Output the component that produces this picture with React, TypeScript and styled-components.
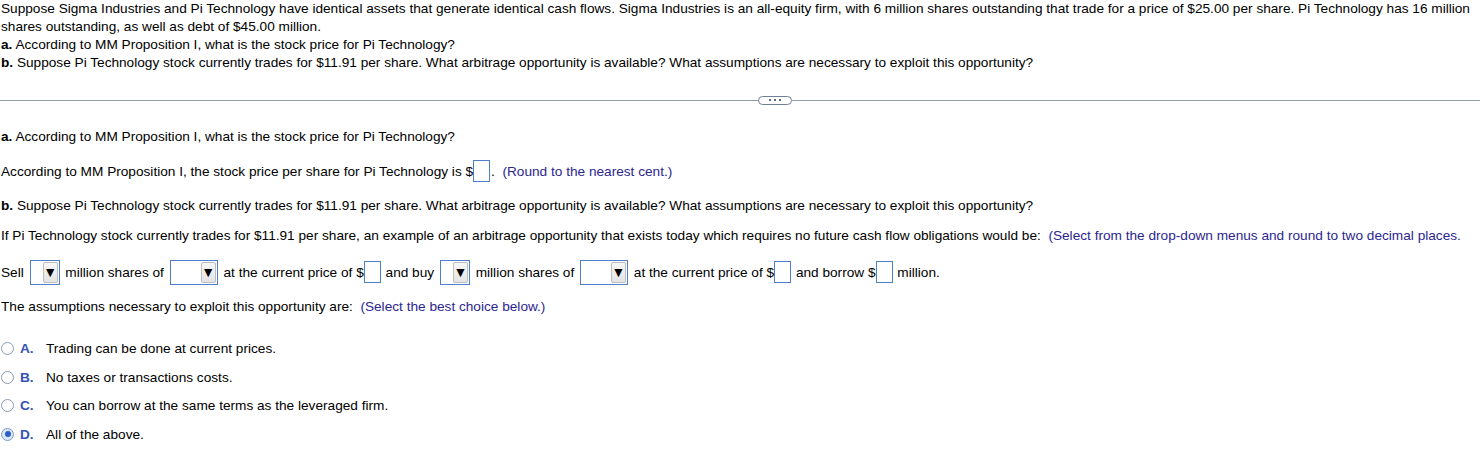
import styled, { createGlobalStyle } from "styled-components";

const GlobalStyle = createGlobalStyle`
  html, body {
    margin: 0;
    padding: 0;
    background: #fff;
  }
  body {
    font-family: "Liberation Sans", Arial, sans-serif;
    font-size: 13.65px;
    color: #000;
  }
`;

const Page = styled.div`
  width: 1480px;
  padding-left: 1px;
  box-sizing: border-box;
`;

const Question = styled.div`
  width: 1474px;
  line-height: 18px;
`;

const Line = styled.div`
  line-height: 18px;
`;

const Bold = styled.b`
  font-weight: bold;
`;

const DividerRow = styled.div`
  display: flex;
  align-items: center;
  margin: 24px 0 0 -1px;
  height: 8px;
`;

const Rule = styled.div<{ $w?: number }>`
  flex: ${(p) => (p.$w ? `0 0 ${p.$w}px` : "1")};
  height: 1px;
  background: #8f9cab;
`;

const MoreButton = styled.div`
  width: 32px;
  height: 7px;
  border: 1px solid #6f7f91;
  border-radius: 5px;
  background: #fff;
  display: flex;
  align-items: center;
  justify-content: center;
  gap: 3px;
`;

const Dot = styled.span`
  width: 2px;
  height: 2px;
  background: #5d6d80;
`;

const Block = styled.div<{ $top: number; $h?: number }>`
  margin-top: ${(p) => p.$top}px;
  height: ${(p) => p.$h ?? 18}px;
  line-height: ${(p) => p.$h ?? 18}px;
  white-space: nowrap;
`;

const Hint = styled.span`
  color: #2c2690;
`;

const AnswerBox = styled.span`
  display: inline-block;
  width: 15px;
  height: 20px;
  border: 1px solid #4d7fcc;
  vertical-align: middle;
  margin: -2px 1px 0 0;
  background: #fff;
`;

const SelectBox = styled.span<{ $w: number }>`
  display: inline-flex;
  justify-content: flex-end;
  align-items: center;
  box-sizing: border-box;
  width: ${(p) => p.$w}px;
  height: 25px;
  border: 1px solid #4d7fcc;
  padding-right: 1px;
  vertical-align: middle;
  margin: -2px 2px 0;
`;

const Arrow = styled.span`
  width: 15px;
  height: 21px;
  box-sizing: border-box;
  border: 1px solid #bdbdbd;
  border-radius: 2px;
  background: linear-gradient(#f7f7f7, #e4e4e4);
  display: flex;
  align-items: center;
  justify-content: center;
  font-size: 14px;
  line-height: 1;
  color: #000;
`;

const Choices = styled.div`
  margin-top: 18px;
  display: grid;
  grid-auto-rows: 28.7px;
`;

const Choice = styled.div`
  display: flex;
  align-items: center;
  margin-left: -1px;
`;

const Radio = styled.span<{ $on?: boolean }>`
  width: 13px;
  height: 13px;
  box-sizing: border-box;
  border-radius: 50%;
  border: 1px solid ${(p) => (p.$on ? "#7d9bc6" : "#8b9db3")};
  background: ${(p) => (p.$on ? "#dbe6f6" : "#fff")};
  display: flex;
  align-items: center;
  justify-content: center;
  margin-left: 1px;
  &::after {
    content: "";
    display: ${(p) => (p.$on ? "block" : "none")};
    width: 6px;
    height: 6px;
    border-radius: 50%;
    background: #2c5cc5;
  }
`;

const Letter = styled.span`
  font-weight: bold;
  color: #3552b5;
  width: 26px;
  margin-left: 6px;
`;

const choices = [
  { key: "A.", text: "Trading can be done at current prices." },
  { key: "B.", text: "No taxes or transactions costs." },
  { key: "C.", text: "You can borrow at the same terms as the leveraged firm." },
  { key: "D.", text: "All of the above.", on: true },
];

const Select = ({ w }: { w: number }) => (
  <SelectBox $w={w}>
    <Arrow>▼</Arrow>
  </SelectBox>
);

export default function App() {
  return (
    <Page>
      <GlobalStyle />
      <Question>
        Suppose Sigma Industries and Pi Technology have identical assets that generate identical cash flows. Sigma
        Industries is an all-equity firm, with 6 million shares outstanding that trade for a price of $25.00 per share. Pi
        Technology has 16 million shares outstanding, as well as debt of $45.00 million.
        <Line>
          <Bold>a.</Bold> According to MM Proposition I, what is the stock price for Pi Technology?
        </Line>
        <Line>
          <Bold>b.</Bold> Suppose Pi Technology stock currently trades for $11.91 per share. What arbitrage opportunity is
          available? What assumptions are necessary to exploit this opportunity?
        </Line>
      </Question>

      <DividerRow>
        <Rule $w={758} />
        <MoreButton>
          <Dot />
          <Dot />
          <Dot />
        </MoreButton>
        <Rule />
      </DividerRow>

      <Block $top={24}>
        <Bold>a.</Bold> According to MM Proposition I, what is the stock price for Pi Technology?
      </Block>
      <Block $top={15} $h={22}>
        According to MM Proposition I, the stock price per share for Pi Technology is $<AnswerBox />.&nbsp;&nbsp;
        <Hint>(Round to the nearest cent.)</Hint>
      </Block>
      <Block $top={14}>
        <Bold>b.</Bold> Suppose Pi Technology stock currently trades for $11.91 per share. What arbitrage opportunity is
        available? What assumptions are necessary to exploit this opportunity?
      </Block>
      <Block $top={12}>
        If Pi Technology stock currently trades for $11.91 per share, an example of an arbitrage opportunity that exists
        today which requires no future cash flow obligations would be:&nbsp;&nbsp;
        <Hint>(Select from the drop-down menus and round to two decimal places.</Hint>
      </Block>
      <Block $top={16} $h={24}>
        Sell <Select w={30} /> million shares of <Select w={48} /> at the current price of $<AnswerBox /> and buy{" "}
        <Select w={30} /> million shares of <Select w={48} /> at the current price of $<AnswerBox /> and borrow $
        <AnswerBox /> million.
      </Block>
      <Block $top={13}>
        The assumptions necessary to exploit this opportunity are:&nbsp;&nbsp;<Hint>(Select the best choice below.)</Hint>
      </Block>

      <Choices>
        {choices.map((c) => (
          <Choice key={c.key}>
            <Radio $on={c.on} />
            <Letter>{c.key}</Letter>
            <span>{c.text}</span>
          </Choice>
        ))}
      </Choices>
    </Page>
  );
}
